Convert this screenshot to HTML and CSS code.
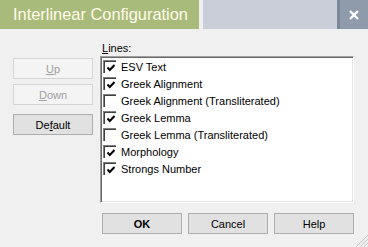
FILE: index.html
```html
<!DOCTYPE html>
<html lang="en">
<head>
    <meta charset="UTF-8">
    <title>Interlinear Configuration</title>
    <link rel="stylesheet" href="styles.css">
</head>
<body>
<div class="window">
    <div class="titlebar">
        <div class="title">Interlinear Configuration</div>
        <div class="title-fill"></div>
        <div class="close">
            <svg width="10" height="10" viewBox="0 0 10 10"><path d="M1 1 L9 9 M9 1 L1 9" stroke="#fff" stroke-width="2.4"/></svg>
        </div>
    </div>

    <div class="dialog">
        <div class="side">
            <button class="btn" disabled><u>U</u>p</button>
            <button class="btn btn-down" disabled><u>D</u>own</button>
            <button class="btn btn-default">De<u>f</u>ault</button>
        </div>
        <div class="main">
            <div class="label"><u>L</u>ines:</div>
            <ul class="lines">
                <li><span class="check on"></span>ESV Text</li>
                <li><span class="check on"></span>Greek Alignment</li>
                <li><span class="check"></span>Greek Alignment (Transliterated)</li>
                <li><span class="check on"></span>Greek Lemma</li>
                <li><span class="check"></span>Greek Lemma (Transliterated)</li>
                <li><span class="check on"></span>Morphology</li>
                <li><span class="check on"></span>Strongs Number</li>
            </ul>
            <div class="actions">
                <button class="btn btn-ok">OK</button>
                <button class="btn">Cancel</button>
                <button class="btn">Help</button>
            </div>
        </div>
    </div>

    <svg class="grip" width="12" height="12" viewBox="0 0 12 12">
        <path d="M11.5 0.5 L0.5 11.5 M11.5 4.5 L4.5 11.5 M11.5 8.5 L8.5 11.5" stroke="#9a9a9a" stroke-width="1" stroke-dasharray="1.4 1.4"/>
    </svg>
</div>
</body>
</html>
```
FILE: styles.css
```css
body { margin: 0; font-family: "Liberation Sans", Arial, sans-serif; font-size: 11px; }

.window {
    position: relative;
    width: 368px;
    height: 247px;
    background: #f0f0f0;
    overflow: hidden;
}

.titlebar { display: flex; height: 29px; }
.title {
    width: 199px;
    box-sizing: border-box;
    padding-left: 13px;
    background: #a9bb7a;
    color: #fffcec;
    font-size: 16.4px;
    line-height: 29px;
}
.title-fill {
    flex: 1;
    margin-left: 4px;
    background: #c9ced8;
    border-right: 3px solid #7b8699;
}
.close {
    width: 28px;
    background: #8f9aab;
    display: flex;
    align-items: center;
    justify-content: center;
}

.dialog {
    display: flex;
    gap: 7px;
    padding: 0 14px 0 13px;
}

.side {
    width: 80px;
    display: flex;
    flex-direction: column;
    padding-top: 29px;
}
.btn-down { margin-top: 5px; }
.btn-default { margin-top: 9px; }

.btn {
    width: 80px;
    height: 21px;
    padding: 0;
    font-family: "Liberation Sans", Arial, sans-serif;
    font-size: 11px;
    color: #000;
    background: #e1e1e1;
    border: 1px solid #adadad;
    border-radius: 0;
}
.btn:disabled {
    background: #f4f4f4;
    border-color: #d5d5d5;
    color: #a0a0a0;
}
.btn-ok { font-weight: bold; }

.main {
    width: 254px;
    display: flex;
    flex-direction: column;
    padding-top: 12px;
}
.label { padding-left: 2px; line-height: 15px; }

.lines {
    list-style: none;
    margin: 0;
    padding: 1px 0 0 1px;
    height: 147px;
    box-sizing: border-box;
    background: #fff;
    border-top: 1px solid #a0a0a0;
    border-left: 1px solid #a0a0a0;
    border-right: 1px solid #fff;
    border-bottom: 1px solid #fff;
    box-shadow: inset 1px 1px 0 #696969, inset -1px -1px 0 #e3e3e3;
}
.lines li {
    display: flex;
    align-items: center;
    height: 17px;
    gap: 5px;
    padding-left: 1px;
}

.check {
    width: 13px;
    height: 13px;
    box-sizing: border-box;
    background: #fff;
    border-top: 1px solid #808080;
    border-left: 1px solid #808080;
    box-shadow: inset 1px 1px 0 #404040;
    background-repeat: no-repeat;
    background-position: 3px 3px;
}
.check.on {
    background-image: url("data:image/svg+xml;utf8,<svg xmlns='http://www.w3.org/2000/svg' width='8' height='8' viewBox='0 0 8 8'><path d='M0.5 3.5 L2.8 6 L7.5 1' stroke='black' stroke-width='2' fill='none'/></svg>");
}

.actions {
    display: flex;
    justify-content: flex-end;
    gap: 6px;
    margin-top: 10px;
}

.grip { position: absolute; right: 0; bottom: 0; }
```
